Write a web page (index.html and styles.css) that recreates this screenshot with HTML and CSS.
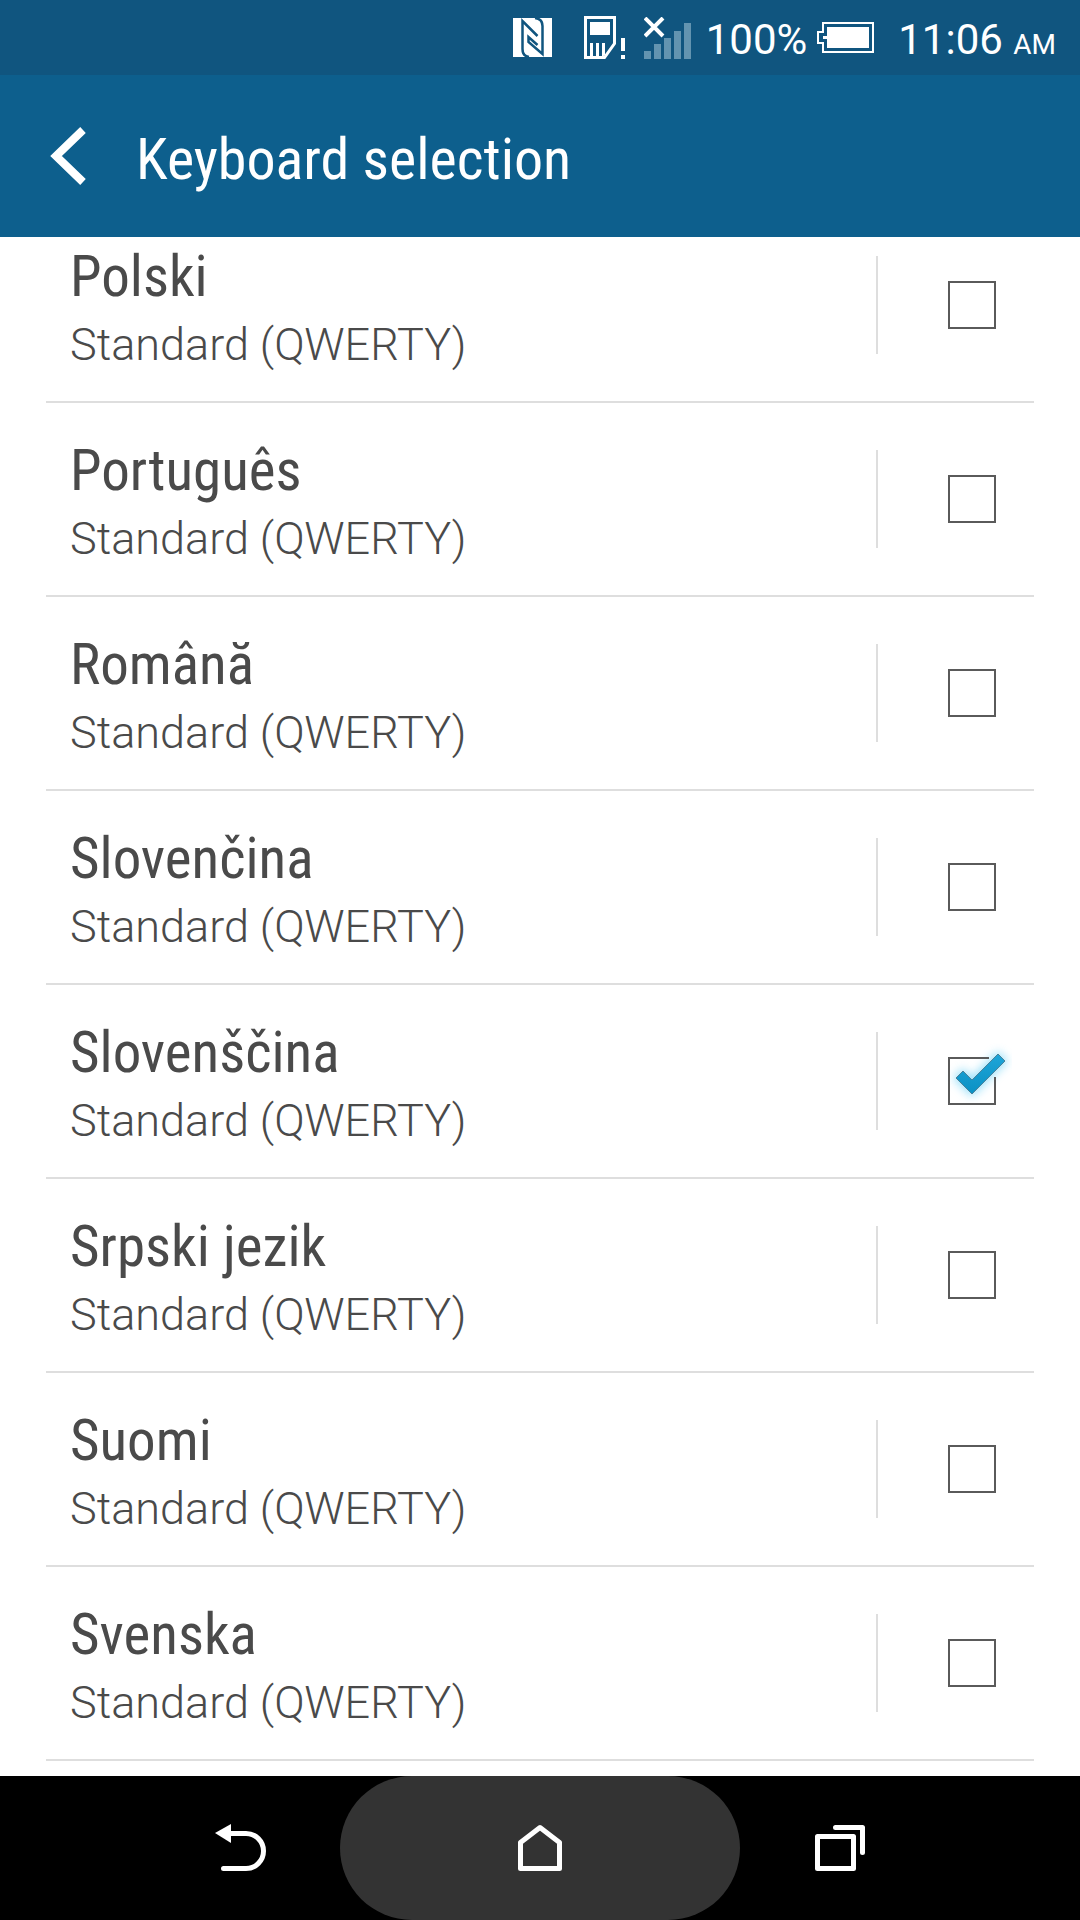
FILE: index.html
```html
<!DOCTYPE html>
<html lang="en">
<head>
<meta charset="utf-8">
<meta name="viewport" content="width=device-width, initial-scale=1">
<title>Keyboard selection</title>
<link rel="stylesheet" href="styles.css">
</head>
<body>
<div class="status">
  <svg class="nfc" width="39" height="39" viewBox="0 0 39 39" aria-label="NFC">
    <path fill="#fff" d="M0 0H39V39H0Z"/>
    <path fill="none" stroke="#10557f" stroke-width="2.500" d="M16 39Q9.500 38 9.500 31V3L24.500 18M22 0Q29.500 1 29.500 8V36L15.500 24V19L24.500 27"/>
  </svg>
  <svg class="sim" width="42" height="43" viewBox="0 0 42 43" aria-label="SIM warning">
    <path fill="none" stroke="#fff" stroke-width="3" d="M1.500 1.500H30.500V27.500L20.500 41.500H1.500Z"/>
    <path fill="#fff" d="M6 6H26V19H6ZM6 27H9V41H6ZM12 27H15V41H12ZM18 27H21V39L18 41ZM37 22H41V35H37ZM37 39H41V43H37Z"/>
  </svg>
  <svg class="signal" width="48" height="42" viewBox="0 0 48 42" aria-label="No signal">
    <path fill="#6394b0" d="M0 34H7V42H0ZM10 27H17V42H10ZM20 21H27V42H20ZM30 14H37V42H30ZM40 6H47V42H40Z"/>
    <path fill="none" stroke="#fff" stroke-width="4" d="M1 1L19 19M19 1L1 19"/>
  </svg>
  <span class="percent">100%</span>
  <svg class="battery" width="57" height="31" viewBox="0 0 57 31" aria-label="Battery full">
    <path fill="none" stroke="#fff" stroke-width="2" d="M6 9V1H56V30H6V21H1V10H6Z"/>
    <path fill="#10557f" d="M5 11H7V20H5Z"/>
    <path fill="#fff" d="M10 5H52V26H10V17H6V14H10Z"/>
  </svg>
  <time class="clock">11:06 <small>AM</small></time>
</div>
<header class="bar">
  <button class="up" aria-label="Back">
    <svg width="38" height="58" viewBox="0 0 38 58"><path fill="none" stroke="#fff" stroke-width="8" d="M35 3L8 29L35 55"/></svg>
  </button>
  <h1>Keyboard selection</h1>
</header>
<main class="content">
  <ul class="list">
    <li><label class="row"><span class="text"><span class="name">Polski</span><span class="layout">Standard (QWERTY)</span></span><span class="tick"><input type="checkbox"></span></label></li>
    <li><label class="row"><span class="text"><span class="name">Português</span><span class="layout">Standard (QWERTY)</span></span><span class="tick"><input type="checkbox"></span></label></li>
    <li><label class="row"><span class="text"><span class="name">Română</span><span class="layout">Standard (QWERTY)</span></span><span class="tick"><input type="checkbox"></span></label></li>
    <li><label class="row"><span class="text"><span class="name">Slovenčina</span><span class="layout">Standard (QWERTY)</span></span><span class="tick"><input type="checkbox"></span></label></li>
    <li><label class="row"><span class="text"><span class="name">Slovenščina</span><span class="layout">Standard (QWERTY)</span></span><span class="tick"><input type="checkbox" checked>
      <svg class="mark" width="80" height="80" viewBox="-16 -16 80 80" aria-hidden="true">
        <defs>
          <linearGradient id="blue" x1="0" y1="0" x2="0" y2="1"><stop offset="0" stop-color="#1fa5d8"/><stop offset="1" stop-color="#0b91c4"/></linearGradient>
          <filter id="glow" x="-50%" y="-50%" width="200%" height="200%"><feGaussianBlur stdDeviation="5"/></filter>
        </defs>
        <path fill="#7fd8f8" stroke="#7fd8f8" stroke-width="4" opacity=".8" filter="url(#glow)" d="M8 21L15 14L24 23L50 -3L57 4L24 37Z"/>
        <path fill="none" stroke="#5a5a5a" stroke-width="2" d="M41 1H1V47H47V20"/>
        <path fill="url(#blue)" stroke="#4b8199" stroke-width="1" d="M8 21L15 14L24 23L50 -3L57 4L24 37Z"/>
      </svg></span></label></li>
    <li><label class="row"><span class="text"><span class="name">Srpski jezik</span><span class="layout">Standard (QWERTY)</span></span><span class="tick"><input type="checkbox"></span></label></li>
    <li><label class="row"><span class="text"><span class="name">Suomi</span><span class="layout">Standard (QWERTY)</span></span><span class="tick"><input type="checkbox"></span></label></li>
    <li><label class="row"><span class="text"><span class="name">Svenska</span><span class="layout">Standard (QWERTY)</span></span><span class="tick"><input type="checkbox"></span></label></li>
  </ul>
</main>
<nav class="nav">
  <button aria-label="Back"><svg width="52" height="48" viewBox="0 0 52 48"><path fill="#fff" d="M1 9L17 0V19Z"/><path fill="none" stroke="#fff" stroke-width="5" stroke-linecap="round" d="M15 9.500H32A17.500 17.500 0 0 1 32 44.500H9.500"/></svg></button>
  <button class="home" aria-label="Home"><svg width="44" height="48" viewBox="0 0 44 48"><path fill="none" stroke="#fff" stroke-width="5" stroke-linejoin="round" d="M2.500 18.500L22 3.500L41.500 18.500V44.500H2.500Z"/></svg></button>
  <button aria-label="Recent apps"><svg width="50" height="48" viewBox="0 0 50 48"><path fill="none" stroke="#fff" stroke-width="5" stroke-linejoin="round" stroke-linecap="round" d="M2.500 12.500H38.500V44.500H2.500ZM20.500 3.500H47.500V28.500"/></svg></button>
</nav>
</body>
</html>
```

FILE: styles.css
```css
* {
  box-sizing: border-box;
}

body {
  margin: 0;
  min-height: 100vh;
  display: flex;
  flex-direction: column;
  background: #fff;
  color: #4a4a4a;
  font-family: Roboto, "Liberation Sans", sans-serif;
}

button {
  display: flex;
  align-items: center;
  justify-content: center;
  padding: 0;
  border: 0;
  background: none;
}

.status {
  height: 75px;
  padding-right: 24px;
  display: flex;
  align-items: center;
  justify-content: flex-end;
  background: #10557f;
  color: #fff;
  font-size: 42px;
  line-height: 48px;
}

.nfc {
  margin-right: 32px;
}

.sim {
  margin-right: 18px;
}

.signal {
  margin-right: 14px;
}

.percent,
.clock {
  padding-top: 4px;
}

.battery {
  margin: 0 24px 0 10px;
}

.clock small {
  font-size: 28px;
  line-height: 28px;
}

.bar {
  position: relative;
  z-index: 1;
  height: 162px;
  padding-left: 48px;
  display: flex;
  align-items: center;
  gap: 50px;
  background: #0d5f8d;
  color: #fff;
}

.bar h1 {
  margin: 6px 0 0;
  font-family: "Roboto Condensed", Roboto, "Liberation Sans", sans-serif;
  font-size: 58px;
  font-weight: 400;
  line-height: 68px;
}

.content {
  flex: 1;
  padding: 0 46px;
  overflow: hidden;
}

.list {
  margin: -28px 0 15px;
  padding: 0;
  list-style: none;
}

.row {
  height: 194px;
  padding-left: 24px;
  display: flex;
  align-items: center;
  border-bottom: 2px solid #dedede;
}

.text {
  flex: 1;
  padding-top: 8px;
  display: flex;
  flex-direction: column;
}

.name {
  font-family: "Roboto Condensed", Roboto, "Liberation Sans", sans-serif;
  font-size: 57px;
  line-height: 72px;
}

.layout {
  font-size: 45px;
  font-weight: 300;
  line-height: 64px;
}

.tick {
  position: relative;
  width: 158px;
  height: 98px;
  padding-left: 70px;
  display: flex;
  align-items: center;
  border-left: 2px solid #dedede;
}

.tick input {
  appearance: none;
  width: 48px;
  height: 48px;
  margin: 0;
  border: 2px solid #5a5a5a;
}

.tick input:checked {
  border-color: transparent;
}

.mark {
  position: absolute;
  left: 54px;
  top: 9px;
}

.nav {
  height: 144px;
  display: flex;
  justify-content: center;
  background: #000;
}

.nav button {
  flex: 0 1 200px;
}

.nav .home {
  flex-basis: 400px;
  border-radius: 72px;
  background: #333;
}
```
